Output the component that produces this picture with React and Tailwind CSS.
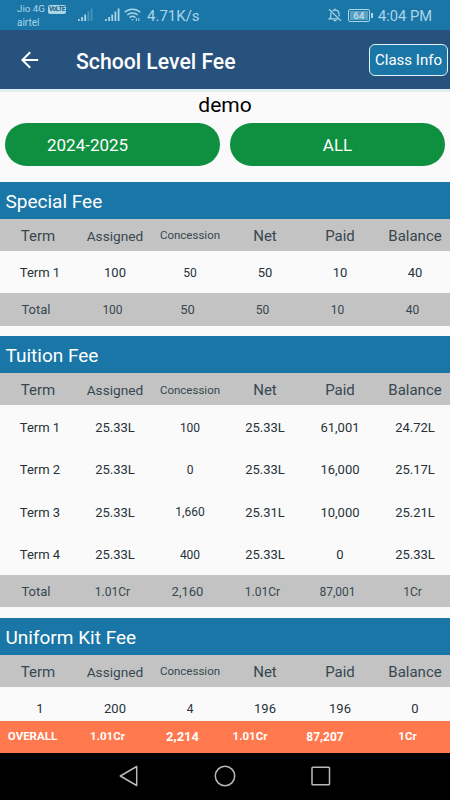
import React from 'react';
import clsx from 'clsx';

const FEES = [
  {
    title: 'Special Fee',
    rows: [['Term 1', '100', '50', '50', '10', '40']],
    total: ['Total', '100', '50', '50', '10', '40'],
  },
  {
    title: 'Tuition Fee',
    rows: [
      ['Term 1', '25.33L', '100', '25.33L', '61,001', '24.72L'],
      ['Term 2', '25.33L', '0', '25.33L', '16,000', '25.17L'],
      ['Term 3', '25.33L', '1,660', '25.31L', '10,000', '25.21L'],
      ['Term 4', '25.33L', '400', '25.33L', '0', '25.33L'],
    ],
    total: ['Total', '1.01Cr', '2,160', '1.01Cr', '87,001', '1Cr'],
  },
  {
    title: 'Uniform Kit Fee',
    rows: [['1', '200', '4', '196', '196', '0']],
  },
];

const HEADERS = ['Term', 'Assigned', 'Concession', 'Net', 'Paid', 'Balance'];
const OVERALL = ['OVERALL', '1.01Cr', '2,214', '1.01Cr', '87,207', '1Cr'];

const SignalIcon = ({ faded }) => (
  <svg width="15" height="14" viewBox="0 0 15 14" fill="#a9d5e8">
    <rect x="0" y="11" width="1.7" height="2" />
    <rect x="3.2" y="9" width="1.8" height="4" />
    <rect x="6.3" y="6.5" width="1.8" height="6.5" />
    <rect x="9.5" y="3.5" width="1.8" height="9.5" opacity={faded ? 0.35 : 1} />
    <rect x="12.7" y="0.5" width="1.8" height="12.5" opacity={faded ? 0.3 : 1} />
  </svg>
);

const WifiIcon = () => (
  <svg width="17" height="14" viewBox="0 0 17 14" fill="none" stroke="#a9d5e8" strokeWidth="1.5">
    <path d="M0.7 4.3C5 0.1 12 0.1 16.3 4.3" />
    <path d="M3.2 7C6.2 4.2 10.8 4.2 13.8 7" />
    <path d="M5.6 9.6C7.3 8.1 9.7 8.1 11.4 9.6" />
    <path d="M7.1 11.2H9.9L8.5 12.8Z" fill="#a9d5e8" stroke="none" />
    <path d="M12.4 10V13M14.8 10V13" strokeWidth="1" />
  </svg>
);

const BellOffIcon = () => (
  <svg width="14" height="14" viewBox="0 0 14 14" fill="none" stroke="#a9d5e8" strokeWidth="1.2">
    <path d="M3 4.6C2.8 5.2 2.8 6 2.8 7V9.2L1.2 10.9H10.4" />
    <path d="M4.5 3C5 2.4 5.8 2.2 7 2.2C9.6 2.2 11.1 3.9 11.1 6.4V8.6" />
    <path d="M7 0.6V2.2M5.6 12.6H8.4M1 1.2L13 12.9" />
  </svg>
);

const StatusBar = () => (
  <div className="h-[30px] bg-[#1a76a6] flex items-center text-[#a9d5e8]">
    <div className="ml-[17px] w-[61px] pt-[2px] text-[10px] leading-[14px]">
      <div className="flex items-center gap-[3px] whitespace-nowrap">
        <span className="w-[28px] text-[9.8px]">Jio 4G</span>
        <span className="w-[18px] h-[9px] rounded-[2px] bg-[#a9d5e8] text-[#1a5f86] text-[6.5px] leading-[9px] font-bold flex justify-center tracking-[-0.4px]">
          VoLTE
        </span>
      </div>
      <div>airtel</div>
    </div>
    <SignalIcon faded />
    <div className="ml-3 flex items-center gap-[4px]">
      <SignalIcon />
      <WifiIcon />
    </div>
    <span className="ml-[6px] text-[15px] leading-[30px] pt-px">4.71K/s</span>
    <div className="ml-auto mr-[18px] flex items-center">
      <BellOffIcon />
      <div className="ml-[6px] w-[22px] h-[13px] border border-[#a9d5e8] rounded-[2px] p-px">
        <div className="h-full bg-[#5aa0c3] text-[9.5px] leading-[10px] text-center text-[#d4ecf6]">64</div>
      </div>
      <div className="w-[2px] h-[5px] ml-px bg-[#a9d5e8]"></div>
      <span className="ml-[5px] text-[14.7px] leading-[30px] pt-px">4:04 PM</span>
    </div>
  </div>
);

const AppBar = () => (
  <div className="h-[59px] bg-[#27527d] flex items-center text-white">
    <svg className="ml-[21px]" width="18" height="18" viewBox="0 0 18 18" fill="none" stroke="#fff" strokeWidth="2">
      <path d="M17.2 9H1.6M9.2 1.2L1.4 9L9.2 16.8" />
    </svg>
    <h1 className="ml-[37px] mt-1 text-[21.2px] font-medium">School Level Fee</h1>
    <button className="ml-auto mr-[2px] mt-px w-[79px] h-[32px] rounded-[6px] border-[1.5px] border-[#e3f1f8] bg-[#1a76a6] pt-px text-[15px] whitespace-nowrap">
      Class Info
    </button>
  </div>
);

const HeaderRow = () => (
  <div className="h-8 bg-[#c3c3c3] pl-[2.5px] pt-[2px] grid grid-cols-[repeat(6,75px)] items-center text-center text-[#37474f]">
    {HEADERS.map((label) => (
      <div
        key={label}
        className={clsx(
          label === 'Term' && 'text-[15px] pr-1',
          label === 'Assigned' && 'text-[13.7px]',
          label === 'Concession' && 'text-[11.5px]',
          !['Term', 'Assigned', 'Concession'].includes(label) && 'text-[15px]'
        )}
      >
        {label}
      </div>
    ))}
  </div>
);

const FeeRow = ({ cells }) => (
  <div className="h-[42.4px] pl-[2.5px] pt-[2px] grid grid-cols-[repeat(6,75px)] items-center text-center text-[13px] text-[#263238]">
    {cells.map((cell, i) => (
      <div key={i} className={clsx(i === 2 && 'text-[12px]')}>
        {cell}
      </div>
    ))}
  </div>
);

const TotalRow = ({ cells }) => (
  <div className="h-[32.5px] bg-[#c3c3c3] pt-px grid grid-cols-6 items-center text-center text-[12px] text-[#37474f]">
    {cells.map((cell, i) => (
      <div key={i} className={clsx(i === 0 && 'text-[13px] pr-[3px]', i === 2 && 'text-[13px]')}>
        {cell}
      </div>
    ))}
  </div>
);

const FeeSection = ({ fee }) => (
  <section className="mb-[10.5px]">
    <h2 className="h-[37px] bg-[#1a76a6] pl-[5.5px] pt-px text-[19px] leading-[38px] text-white">{fee.title}</h2>
    <HeaderRow />
    {fee.rows.map((row, i) => (
      <FeeRow key={i} cells={row} />
    ))}
    {fee.total && <TotalRow cells={fee.total} />}
  </section>
);

const NavBar = () => (
  <div className="h-[47.5px] bg-black flex justify-center items-center gap-[74px]">
    <svg width="22" height="22" viewBox="0 0 22 22" fill="none" stroke="#b9b9b9" strokeWidth="1.5" strokeLinejoin="round">
      <path d="M18.7 1.5V20.5L2.3 11Z" />
    </svg>
    <svg width="22" height="22" viewBox="0 0 22 22" fill="none" stroke="#b9b9b9" strokeWidth="1.5">
      <circle cx="11" cy="11" r="9.7" />
    </svg>
    <svg width="22" height="22" viewBox="0 0 22 22" fill="none" stroke="#b9b9b9" strokeWidth="1.5">
      <rect x="2" y="2.3" width="17.5" height="17.5" rx="0.8" />
    </svg>
  </div>
);

const App = () => {
  return (
    <div className="w-[450px] h-[800px] overflow-hidden bg-[#fafafa] flex flex-col font-[Roboto,sans-serif]">
      <StatusBar />
      <AppBar />
      <div className="h-[3px] bg-[#e3eef5]"></div>

      {/* School name and filters */}
      <div className="h-[31px] text-center text-[21px] leading-[27px] text-black">demo</div>
      <div className="px-[5px] grid grid-cols-2 gap-[10px] text-[17px] text-white">
        <button className="h-[43px] rounded-full bg-[#0f9040] text-left pl-[42px] pt-[3px]">2024-2025</button>
        <button className="h-[43px] rounded-full bg-[#0f9040] pt-[3px]">ALL</button>
      </div>

      {/* Fee tables */}
      <div className="mt-4 flex-1 min-h-0 overflow-hidden">
        {FEES.map((fee) => (
          <FeeSection key={fee.title} fee={fee} />
        ))}
      </div>

      {/* Grand total */}
      <div className="h-[32px] shrink-0 bg-[#ff784e] pt-px grid grid-cols-[65px_85px_65px_70px_80px_85px] items-center text-center text-[11.5px] font-bold text-white">
        {OVERALL.map((cell, i) => (
          <div key={i} className={clsx(i === 2 && 'text-[13px]', i === 4 && 'text-[12px]')}>
            {cell}
          </div>
        ))}
      </div>
      <NavBar />
    </div>
  );
};

export default App;
